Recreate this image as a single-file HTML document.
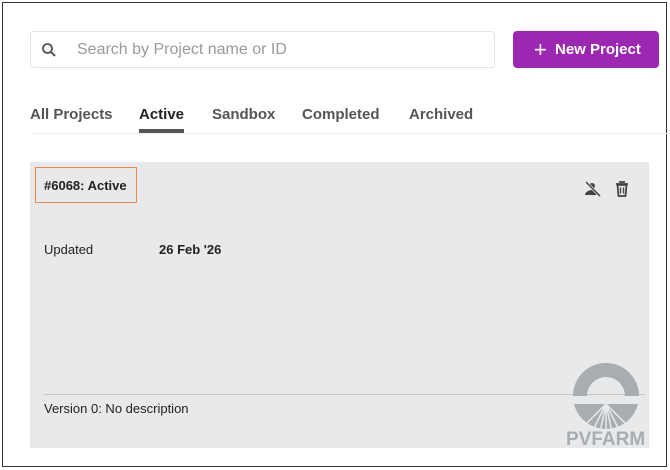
<!DOCTYPE html>
<html><head><style>
*{box-sizing:border-box;margin:0;padding:0}
body{width:670px;height:470px;background:#fff;font-family:"Liberation Sans",sans-serif;position:relative;overflow:hidden}
.frame{position:absolute;left:2px;top:2px;width:665px;height:465px;border:1.5px solid #333}
.search{position:absolute;left:30px;top:31px;width:465px;height:37px;border:1px solid #e3e3e3;border-radius:4px}
.search span{position:absolute;left:46px;top:9px;font-size:16px;color:#9a9a9a}
.btn{position:absolute;left:513px;top:31px;width:146px;height:37px;background:#9c27b0;border-radius:4px;color:#fff;font-weight:bold;font-size:15px;line-height:37px;padding-left:42px}
.btn i{position:absolute;left:21px;top:0;font-style:normal;font-size:22px;font-weight:normal}
.tabs{position:absolute;left:30px;top:106px;font-size:15px;font-weight:bold;color:#555}
.tabs span{position:absolute;white-space:nowrap}
.line{position:absolute;left:30px;top:133px;width:640px;height:1px;background:#eee}
.ul{position:absolute;left:139px;top:129px;width:45px;height:4px;background:#555}
.card{position:absolute;left:30px;top:162px;width:619px;height:286px;background:#e8e9eb}
.tag{position:absolute;left:35px;top:167px;width:102px;height:36px;border:1px solid #f08a4b;font-size:13px;font-weight:bold;color:#222;line-height:36px;padding-left:8px}
.t{position:absolute;font-size:13px;color:#222}
</style></head><body>
<div class="frame"></div>
<div class="search">
<svg style="position:absolute;left:10px;top:10px" width="16" height="16" viewBox="0 0 16 16"><circle cx="6.5" cy="6.5" r="4.5" fill="none" stroke="#555" stroke-width="1.8"/><path d="M10 10l4 4" stroke="#555" stroke-width="2"/></svg>
<span>Search by Project name or ID</span></div>
<div class="btn"><i>+</i>New Project</div>
<div class="tabs">
<span style="left:0">All Projects</span>
<span style="left:109px;color:#222">Active</span>
<span style="left:182px">Sandbox</span>
<span style="left:272px">Completed</span>
<span style="left:379px">Archived</span>
</div>
<div class="line"></div><div class="ul"></div>
<div class="card"></div>
<div class="tag">#6068: Active</div>
<svg style="position:absolute;left:584px;top:180px" width="18" height="18" viewBox="0 0 18 18"><circle cx="8" cy="6" r="3" fill="#444"/><path d="M1 15c0-3 4-5 7-5s7 2 7 5z" fill="#444"/><path d="M2 2l14 14" stroke="#e8e9eb" stroke-width="3"/><path d="M2 2l14 14" stroke="#444" stroke-width="1.5"/></svg>
<svg style="position:absolute;left:614px;top:180px" width="16" height="18" viewBox="0 0 16 18"><path d="M5 2h6M2 4h12" stroke="#444" stroke-width="1.8"/><path d="M3.5 5h9l-1 11h-7z" fill="none" stroke="#444" stroke-width="1.8"/><path d="M6.5 7.5v6M9.5 7.5v6" stroke="#444" stroke-width="1.3"/></svg>
<div class="t" style="left:44px;top:242px">Updated</div>
<div class="t" style="left:159px;top:242px;font-weight:bold">26 Feb '26</div>
<div style="position:absolute;left:44px;top:394px;width:601px;height:1px;background:#c4c6c8"></div>
<div class="t" style="left:44px;top:401px">Version 0: No description</div>
<svg style="position:absolute;left:570px;top:360px" width="72" height="72" viewBox="0 0 72 72">
<path d="M3 36A33 33 0 0 1 69 36L55 36A19 19 0 0 0 17 36Z" fill="#a9adb0"/>
<path d="M4 44L68 44A33 33 0 0 1 4 44Z" fill="#a9adb0"/>
<path d="M36 44L10 70M36 44L22 72M36 44L30 72M36 44L36 72M36 44L42 72M36 44L50 72M36 44L62 70" stroke="#e8e9eb" stroke-width="1.5"/>
</svg>
<div style="position:absolute;left:566px;top:429px;font-size:19px;font-weight:bold;color:#a9adb0">PVFARM</div>
</body></html>
